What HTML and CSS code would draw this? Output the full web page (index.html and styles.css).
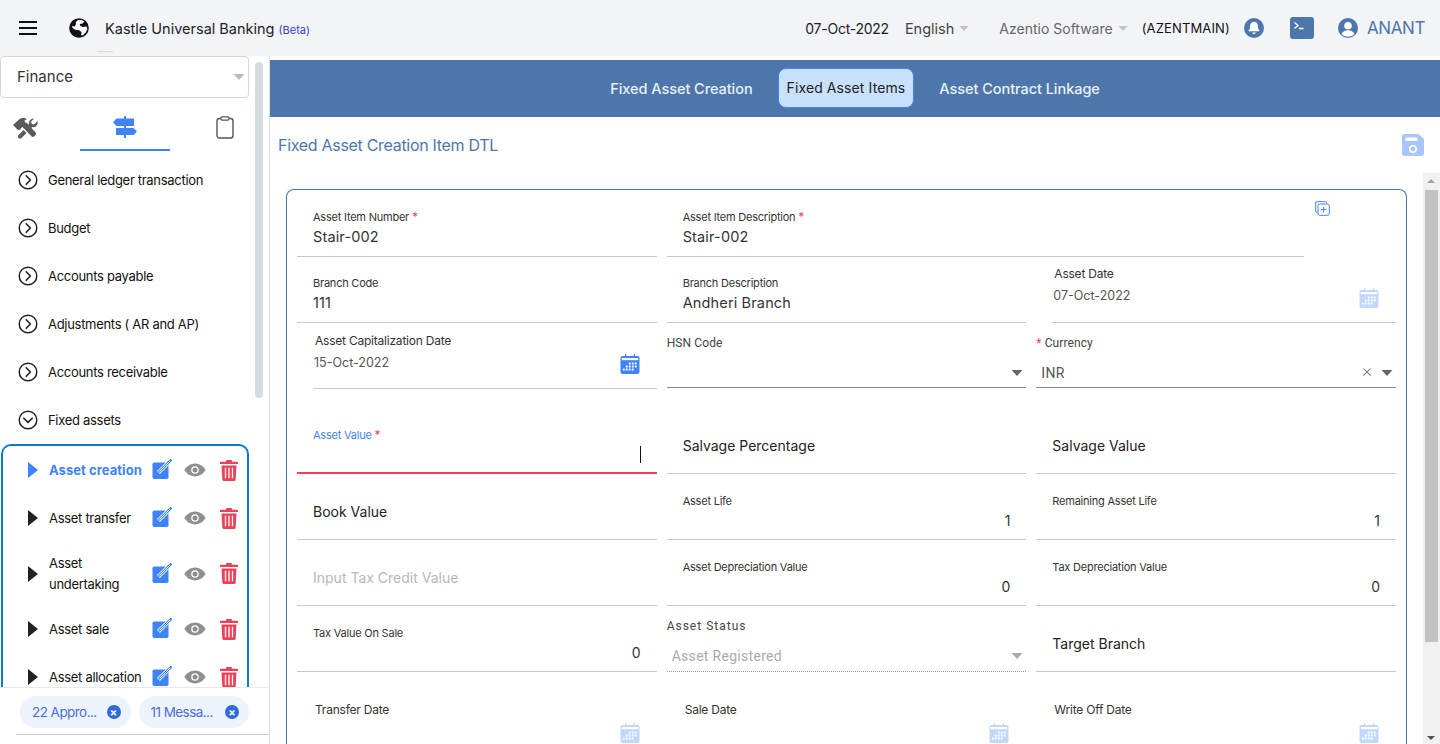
FILE: index.html
```html
<!DOCTYPE html>
<html lang="en">
<head>
    <meta charset="UTF-8">
    <meta name="viewport" content="width=device-width, initial-scale=1.0">
    <title>Kastle Universal Banking</title>
    <link rel="stylesheet" href="styles.css">
</head>
<body>
    <svg class="icon-defs" width="0" height="0">
        <defs>
            <symbol id="i-circle-right" viewBox="0 0 20 20">
                <circle cx="10" cy="10" r="8.8" fill="none" stroke="#222" stroke-width="1.5"/>
                <path d="M8.2 5.8 12.4 10l-4.2 4.2" fill="none" stroke="#222" stroke-width="1.6" stroke-linecap="round" stroke-linejoin="round"/>
            </symbol>
            <symbol id="i-circle-down" viewBox="0 0 20 20">
                <circle cx="10" cy="10" r="8.8" fill="none" stroke="#222" stroke-width="1.5"/>
                <path d="M5.8 8.2 10 12.4l4.2-4.2" fill="none" stroke="#222" stroke-width="1.6" stroke-linecap="round" stroke-linejoin="round"/>
            </symbol>
            <symbol id="i-edit" viewBox="0 0 20 20">
                <rect x=".5" y="3.500" width="16" height="16.500" rx="1.800" fill="#3f83f8"/>
                <path d="M6.500 13.500 19 1" fill="none" stroke="#fff" stroke-width="4"/>
                <path d="M6.800 13.200 19.500.5" fill="none" stroke="#3f83f8" stroke-width="2.400"/>
                <path d="M7.500 12.500 18 2" fill="none" stroke="#fff" stroke-width="1"/>
            </symbol>
            <symbol id="i-eye" viewBox="0 0 22 14">
                <path d="M11 .6C6 .6 2.300 3.800.4 7c1.900 3.200 5.600 6.400 10.600 6.400S19.700 10.200 21.600 7C19.700 3.800 16 .6 11 .6z" fill="#8f8f8f"/>
                <circle cx="11" cy="7" r="3.800" fill="#fff"/>
                <circle cx="11" cy="7" r="2.500" fill="#8f8f8f"/>
            </symbol>
            <symbol id="i-trash" viewBox="0 0 18 21">
                <path d="M6.500 0h5l.8 1.800H17.400a.6.600 0 0 1 .6.600v1.700H0V2.400a.6.600 0 0 1 .6-.6h5.100zM1.500 5.400h15l-.8 14a1.700 1.700 0 0 1-1.700 1.600H4a1.700 1.700 0 0 1-1.700-1.600z" fill="#e9435a"/>
                <path d="M5.500 7.800v10.500M9 7.800v10.500M12.500 7.800v10.500" stroke="#fff" stroke-width="1.300"/>
            </symbol>
            <symbol id="i-calendar" viewBox="0 0 20 20">
                <path d="M5 0h1.200v2h7.600V0H15v2h2.500A2 2 0 0 1 19.500 4v14a2 2 0 0 1-2 2h-15a2 2 0 0 1-2-2V4a2 2 0 0 1 2-2H5z"/>
                <path d="M1.800 4h16.400v2.200H1.800z" fill="#fff"/>
                <path d="M8.800 8.600h1.800v1.800H8.800zM11.800 8.600h1.800v1.800h-1.800zM14.800 8.600h1.800v1.800h-1.800zM5.800 11.600h1.800v1.800H5.800zM8.800 11.600h1.800v1.800H8.800zM11.800 11.600h1.800v1.800h-1.800zM14.800 11.600h1.800v1.800h-1.800zM2.900 14.600h1.800v1.800H2.900zM5.800 14.600h1.800v1.800H5.800zM8.800 14.600h1.800v1.800H8.800zM11.800 14.600h1.800v1.800h-1.800z" fill="#fff"/>
            </symbol>
            <symbol id="i-arrow" viewBox="0 0 12 6">
                <path d="M.5 0h11L6 6z"/>
            </symbol>
        </defs>
    </svg>

    <header class="topbar">
        <button class="menu-btn" aria-label="Menu"><span></span><span></span><span></span></button>
        <svg class="globe" width="20" height="20" viewBox="0 0 20 20">
            <circle cx="10" cy="10" r="9.800" fill="#111"/>
            <path d="M8.500 2.300 12.500 2l3 1.600-2 2-2.700.4.300 1.700 2.500 1.200 4-.5.800 2.600-1.600 3.400-3.300 3.200-1.300-.4.300-3.200-2.400-1.800-4.100-.5-2.600-2-.3-1.600 2.600.4L7 6l-.4-1.500z" fill="#fff"/>
        </svg>
        <div class="brand">Kastle Universal Banking <small>(Beta)</small></div>
        <div class="topbar-right">
            <span class="top-date">07-Oct-2022</span>
            <span class="top-select lang">English <svg class="top-caret" width="10" height="5"><use href="#i-arrow"/></svg></span>
            <span class="top-select company">Azentio Software <svg class="top-caret" width="10" height="5"><use href="#i-arrow"/></svg></span>
            <span class="top-code">(AZENTMAIN)</span>
            <svg class="top-bell" width="20" height="20" viewBox="0 0 20 20">
                <circle cx="10" cy="10" r="10" fill="#4d77ab"/>
                <path d="M10 3.800c-2.400 0-3.900 1.800-3.900 4.200 0 2.600-.8 3.700-1.500 4.600-.2.300 0 .7.400.7h10c.4 0 .6-.4.400-.7-.7-.9-1.500-2-1.500-4.600 0-2.400-1.500-4.200-3.900-4.200zM8.300 14.400a1.700 1.700 0 0 0 3.400 0z" fill="#fff"/>
            </svg>
            <svg class="top-term" width="24" height="22" viewBox="0 0 24 22">
                <rect width="24" height="22" rx="3" fill="#4d77ab"/>
                <path d="M4.500 5.500 8 8.500l-3.500 3M9 11.500h4.500" fill="none" stroke="#fff" stroke-width="1.300"/>
            </svg>
            <svg class="top-user" width="20" height="20" viewBox="0 0 20 20">
                <circle cx="10" cy="10" r="10" fill="#4d77ab"/>
                <circle cx="10" cy="7.800" r="3.800" fill="#fff"/>
                <path d="M3.600 16c1-2.600 3.400-3.800 6.400-3.800s5.400 1.200 6.400 3.800c-1.700 1.700-4 2.700-6.400 2.700S5.300 17.700 3.600 16z" fill="#fff"/>
            </svg>
            <span class="top-name">ANANT</span>
        </div>
    </header>

    <div class="layout">
        <aside class="sidebar">
            <div class="side-scroll"></div>
            <div class="module-select">
                <span>Finance</span>
                <svg width="12" height="6"><use href="#i-arrow"/></svg>
            </div>
            <div class="side-tabs">
                <div class="side-tab">
                    <svg width="25" height="22" viewBox="0 0 25 22">
                        <path d="M0 8 6 2.500C8.500.6 11.500.6 14 2l-2.500 1.500.6 2 1.900.5 8.500 9.500c.8 1 .7 2-.2 2.800l-1 1c-.9.800-2 .8-2.800-.1L9.500 10 8 11 7.500 12.500 5 13z" fill="#5a5a5a"/>
                        <path d="M24.500 4c.6 2.700-.5 5.200-3.100 6-.8.300-1.600.3-2.300.1L16.500 13l-3-3 2.500-2.800c-.4-2.400.9-4.700 3.300-5.500.6-.2 1.200-.3 1.800-.2l-3 3 .6 2.400 2.400.6zM10.500 13l3 3-5 5c-.9.800-2.100.8-3 0-.8-.9-.8-2.100 0-3z" fill="#5a5a5a"/>
                    </svg>
                </div>
                <div class="side-tab active">
                    <svg width="24" height="22" viewBox="0 0 24 22">
                        <path d="M11 0h2v2.500h8v7.500h-8v2h7.500l3.500 3.500-3.500 3.500H13v3h-2v-3H3v-7h8v-2H3.500L0 6.250 3.500 2.500H11z" fill="#3f83f8"/>
                    </svg>
                </div>
                <div class="side-tab">
                    <svg width="18" height="23" viewBox="0 0 18 23">
                        <rect x="1" y="2.500" width="16" height="19.500" rx="2.500" fill="none" stroke="#555" stroke-width="1.400"/>
                        <rect x="5" y=".8" width="8" height="3.400" rx="1.200" fill="#fff" stroke="#555" stroke-width="1.200"/>
                    </svg>
                </div>
            </div>
            <nav class="side-menu">
                <div class="menu-row"><svg width="20" height="20"><use href="#i-circle-right"/></svg>General ledger transaction</div>
                <div class="menu-row"><svg width="20" height="20"><use href="#i-circle-right"/></svg>Budget</div>
                <div class="menu-row"><svg width="20" height="20"><use href="#i-circle-right"/></svg>Accounts payable</div>
                <div class="menu-row"><svg width="20" height="20"><use href="#i-circle-right"/></svg>Adjustments ( AR and AP)</div>
                <div class="menu-row"><svg width="20" height="20"><use href="#i-circle-right"/></svg>Accounts receivable</div>
                <div class="menu-row"><svg width="20" height="20"><use href="#i-circle-down"/></svg>Fixed assets</div>
                <div class="sub-menu">
                    <div class="sub-row current">
                        <span class="tri"></span><span class="sub-name">Asset creation</span>
                        <svg class="ic-edit" width="20" height="20"><use href="#i-edit"/></svg>
                        <svg class="ic-eye" width="22" height="14"><use href="#i-eye"/></svg>
                        <svg class="ic-trash" width="18" height="21"><use href="#i-trash"/></svg>
                    </div>
                    <div class="sub-row">
                        <span class="tri"></span><span class="sub-name">Asset transfer</span>
                        <svg class="ic-edit" width="20" height="20"><use href="#i-edit"/></svg>
                        <svg class="ic-eye" width="22" height="14"><use href="#i-eye"/></svg>
                        <svg class="ic-trash" width="18" height="21"><use href="#i-trash"/></svg>
                    </div>
                    <div class="sub-row tall">
                        <span class="tri"></span><span class="sub-name">Asset undertaking</span>
                        <svg class="ic-edit" width="20" height="20"><use href="#i-edit"/></svg>
                        <svg class="ic-eye" width="22" height="14"><use href="#i-eye"/></svg>
                        <svg class="ic-trash" width="18" height="21"><use href="#i-trash"/></svg>
                    </div>
                    <div class="sub-row">
                        <span class="tri"></span><span class="sub-name">Asset sale</span>
                        <svg class="ic-edit" width="20" height="20"><use href="#i-edit"/></svg>
                        <svg class="ic-eye" width="22" height="14"><use href="#i-eye"/></svg>
                        <svg class="ic-trash" width="18" height="21"><use href="#i-trash"/></svg>
                    </div>
                    <div class="sub-row">
                        <span class="tri"></span><span class="sub-name">Asset allocation</span>
                        <svg class="ic-edit" width="20" height="20"><use href="#i-edit"/></svg>
                        <svg class="ic-eye" width="22" height="14"><use href="#i-eye"/></svg>
                        <svg class="ic-trash" width="18" height="21"><use href="#i-trash"/></svg>
                    </div>
                </div>
            </nav>
            <div class="side-footer">
                <div class="chips">
                    <span class="chip">22 Appro... <b>×</b></span>
                    <span class="chip">11 Messa... <b>×</b></span>
                </div>
                <div class="footer-line"></div>
            </div>
        </aside>

        <main class="content">
            <div class="band">
                <a class="band-tab">Fixed Asset Creation</a>
                <a class="band-tab active">Fixed Asset Items</a>
                <a class="band-tab">Asset Contract Linkage</a>
            </div>
            <div class="title-row">
                <h2>Fixed Asset Creation Item DTL</h2>
                <svg width="22" height="22" viewBox="0 0 22 22">
                    <path d="M3 0h13.500L22 5v14a3 3 0 0 1-3 3H3a3 3 0 0 1-3-3V3a3 3 0 0 1 3-3z" fill="#a9c5fb"/>
                    <rect x="3.500" y="3.500" width="12" height="3.500" fill="#fff"/>
                    <circle cx="11" cy="15" r="3.200" fill="none" stroke="#fff" stroke-width="1.500"/>
                </svg>
            </div>
            <div class="form-wrap">
                <div class="form-scroll">
                    <form class="form-box">
                        <svg class="copy-icon" width="15" height="15" viewBox="0 0 15 15">
                            <path d="M2.500 11.500H2A1.300 1.300 0 0 1 .7 10.200V2A1.300 1.300 0 0 1 2 .7h8.200A1.300 1.300 0 0 1 11.500 2v.5" fill="none" stroke="#3f83f8"/>
                            <rect x="3" y="3" width="11.300" height="11.300" rx="1.800" fill="#fff" stroke="#3f83f8"/>
                            <path d="M8.600 5.800v5.700M5.800 8.600h5.700" stroke="#3f83f8"/>
                        </svg>

                        <div class="field wide">
                            <label>Asset Item Number <i>*</i></label>
                            <div class="val">Stair-002</div>
                        </div>
                        <div class="field wide span2">
                            <label>Asset Item Description <i>*</i></label>
                            <div class="val">Stair-002</div>
                        </div>

                        <div class="field">
                            <label>Branch Code</label>
                            <div class="val">111</div>
                        </div>
                        <div class="field">
                            <label>Branch Description</label>
                            <div class="val">Andheri Branch</div>
                        </div>
                        <div class="date-field">
                            <label>Asset Date</label>
                            <div class="date-val">07-Oct-2022 <svg class="cal faded" width="20" height="20"><use href="#i-calendar"/></svg></div>
                        </div>

                        <div class="date-field low">
                            <label>Asset Capitalization Date</label>
                            <div class="date-val">15-Oct-2022 <svg class="cal" width="20" height="20"><use href="#i-calendar"/></svg></div>
                        </div>
                        <div class="select-field">
                            <label>HSN Code</label>
                            <div class="sel-val"><span></span><svg width="12" height="6"><use href="#i-arrow"/></svg></div>
                        </div>
                        <div class="select-field">
                            <label><i>*</i> Currency</label>
                            <div class="sel-val"><span>INR</span><em>×</em><svg width="12" height="6"><use href="#i-arrow"/></svg></div>
                        </div>

                        <div class="field focused">
                            <label>Asset Value <i>*</i></label>
                            <div class="val"><span class="caret"></span></div>
                        </div>
                        <div class="field empty"><div class="val">Salvage Percentage</div></div>
                        <div class="field empty"><div class="val">Salvage Value</div></div>

                        <div class="field empty"><div class="val">Book Value</div></div>
                        <div class="field num">
                            <label>Asset Life</label>
                            <div class="val">1</div>
                        </div>
                        <div class="field num">
                            <label>Remaining Asset Life</label>
                            <div class="val">1</div>
                        </div>

                        <div class="field empty muted"><div class="val">Input Tax Credit Value</div></div>
                        <div class="field num">
                            <label>Asset Depreciation Value</label>
                            <div class="val">0</div>
                        </div>
                        <div class="field num">
                            <label>Tax Depreciation Value</label>
                            <div class="val">0</div>
                        </div>

                        <div class="field num">
                            <label>Tax Value On Sale</label>
                            <div class="val">0</div>
                        </div>
                        <div class="select-field disabled">
                            <label>Asset Status</label>
                            <div class="sel-val"><span>Asset Registered</span><svg width="12" height="6"><use href="#i-arrow"/></svg></div>
                        </div>
                        <div class="field empty"><div class="val">Target Branch</div></div>

                        <div class="date-field low">
                            <label>Transfer Date</label>
                            <div class="date-val"><span></span><svg class="cal faded" width="20" height="20"><use href="#i-calendar"/></svg></div>
                        </div>
                        <div class="date-field low">
                            <label>Sale Date</label>
                            <div class="date-val"><span></span><svg class="cal faded" width="20" height="20"><use href="#i-calendar"/></svg></div>
                        </div>
                        <div class="date-field low">
                            <label>Write Off Date</label>
                            <div class="date-val"><span></span><svg class="cal faded" width="20" height="20"><use href="#i-calendar"/></svg></div>
                        </div>
                    </form>
                </div>
                <div class="scrollbar">
                    <span class="sb-up"></span>
                    <span class="sb-thumb"></span>
                    <span class="sb-down"></span>
                </div>
            </div>
        </main>
    </div>
</body>
</html>
```

FILE: styles.css
```css
* {
    box-sizing: border-box;
}
html, body {
    margin: 0;
    height: 100%;
    overflow: hidden;
}
body {
    font-family: Inter, "Liberation Sans", sans-serif;
    color: #222;
    background: #fff;
    display: flex;
    flex-direction: column;
}
.icon-defs {
    position: absolute;
}

/* top bar */
.topbar {
    height: 56px;
    flex: none;
    display: flex;
    align-items: center;
    background: #f3f4f8;
    padding-left: 19px;
    position: relative;
}
.topbar::after {
    content: "";
    position: absolute;
    left: 97px;
    bottom: 4px;
    width: 16px;
    height: 1px;
    background: #d8d8d8;
}
.menu-btn {
    width: 18px;
    height: 14px;
    padding: 0;
    border: 0;
    background: none;
    display: flex;
    flex-direction: column;
    justify-content: space-between;
}
.menu-btn span {
    display: block;
    height: 2px;
    background: #111;
}
.globe {
    margin-left: 32px;
}
.brand {
    margin-left: 16px;
    font-size: 14.5px;
    color: #222;
}
.brand small {
    font-size: 11px;
    color: #3a3ae0;
}
.topbar-right {
    margin-left: auto;
    display: flex;
    align-items: center;
    padding-right: 15px;
    font-size: 14px;
}
.top-date {
    color: #222;
    margin-right: 16px;
    letter-spacing: -.25px;
}
.top-select {
    color: #444;
    display: flex;
    align-items: center;
    gap: 5px;
}
.top-select.lang {
    font-size: 14.5px;
}
.top-select.company {
    color: #666;
    margin-left: 30px;
}
.top-caret {
    fill: #c4c4c4;
}
.top-code {
    margin-left: 14px;
    font-size: 13px;
    color: #111;
    letter-spacing: .15px;
}
.top-bell {
    margin-left: 14px;
}
.top-term {
    margin-left: 26px;
}
.top-user {
    margin-left: 24px;
}
.top-name {
    margin-left: 9px;
    font-size: 17px;
    letter-spacing: -.4px;
    color: #4d77ab;
}

.layout {
    flex: 1;
    min-height: 0;
    display: flex;
}

/* sidebar */
.sidebar {
    width: 270px;
    flex: none;
    border-right: 1px solid #ddd;
    display: flex;
    flex-direction: column;
    position: relative;
    overflow: hidden;
}
.side-scroll {
    position: absolute;
    left: 255px;
    top: 6px;
    width: 8px;
    height: 336px;
    border-radius: 4px;
    background: #d3dde0;
}
.module-select {
    width: 249px;
    height: 42px;
    flex: none;
    border: 1px solid #d5d5d8;
    border-radius: 4px;
    display: flex;
    align-items: center;
    justify-content: space-between;
    padding: 0 3px 2px 16px;
    font-size: 15px;
    color: #333;
}
.module-select svg {
    fill: #bbb;
    margin-top: 2px;
}
.side-tabs {
    width: 250px;
    height: 53px;
    flex: none;
    display: grid;
    grid-template-columns: 50px 1fr 50px;
    column-gap: 30px;
}
.side-tab {
    display: flex;
    align-items: center;
    justify-content: center;
    padding-top: 10px;
    padding-bottom: 4px;
}
.side-tab.active {
    border-bottom: 2px solid #3f83f8;
}
.side-menu {
    flex: 1;
    min-height: 0;
    overflow: hidden;
    padding-top: 5px;
}
.menu-row {
    height: 48px;
    display: flex;
    align-items: center;
    padding-left: 18px;
    gap: 10px;
    font-size: 13px;
    color: #111;
    letter-spacing: -.3px;
}
.sub-menu {
    width: 248px;
    margin-left: 1px;
    border: 2px solid #0a7ad0;
    border-bottom: 0;
    border-radius: 10px 10px 0 0;
    padding-right: 9px;
}
.sub-row {
    height: 48px;
    display: flex;
    align-items: center;
    font-size: 13px;
    color: #111;
    letter-spacing: -.3px;
}
.sub-row.tall {
    height: 63px;
}
.tri {
    width: 0;
    height: 0;
    margin-left: 25px;
    flex: none;
    border-left: 10px solid #222;
    border-top: 8px solid transparent;
    border-bottom: 8px solid transparent;
}
.sub-name {
    width: 103px;
    margin-left: 11px;
    flex: none;
    line-height: 21px;
}
.current .tri {
    border-left-color: #3f83f8;
}
.current .sub-name {
    color: #3f83f8;
    font-weight: 700;
    letter-spacing: .05px;
}
.ic-edit {
    flex: none;
    margin-top: -2px;
}
.ic-eye {
    flex: none;
    margin-left: 12px;
}
.ic-trash {
    flex: none;
    margin-left: 14px;
}
.side-footer {
    height: 57px;
    flex: none;
    background: #fff;
    border-top: 1px solid #e8e8e8;
}
.chips {
    display: flex;
    gap: 8px;
    padding: 8px 0 0 20px;
}
.chip {
    width: 110.5px;
    height: 32px;
    border-radius: 16px;
    background: #edf3fc;
    color: #4a6fd8;
    font-size: 13.5px;
    letter-spacing: -.55px;
    display: flex;
    align-items: center;
    justify-content: space-between;
    padding: 0 10px 0 12px;
    white-space: nowrap;
}
.chip b {
    width: 14px;
    height: 14px;
    border-radius: 50%;
    background: #2f6bd8;
    color: #fff;
    font-size: 11px;
    line-height: 14px;
    letter-spacing: 0;
    text-align: center;
}
.footer-line {
    margin: 6px 0 0 16px;
    border-top: 1px solid #ccc;
}

/* main area */
.content {
    flex: 1;
    min-width: 0;
    display: flex;
    flex-direction: column;
}
.band {
    height: 57px;
    flex: none;
    margin-top: 4px;
    background: #4d77ab;
    display: flex;
    align-items: center;
    justify-content: center;
}
.band-tab {
    color: #eaf0f7;
    font-size: 14.5px;
    font-weight: 500;
    letter-spacing: -.05px;
    padding: 0 8px;
    line-height: 38px;
    border: 1px solid transparent;
    margin: 0 8px;
}
.band-tab.active {
    background: #c8e1ff;
    color: #222;
    font-size: 14px;
    font-weight: 400;
    letter-spacing: .1px;
    border-color: #3f83f8;
    border-radius: 8px;
    margin-top: -1px;
}
.title-row {
    height: 56px;
    flex: none;
    display: flex;
    align-items: center;
    justify-content: space-between;
    padding: 0 16px 0 8px;
}
.title-row h2 {
    margin: 0;
    font-size: 16px;
    font-weight: 400;
    letter-spacing: -.3px;
    color: #4d77ab;
}
.form-wrap {
    flex: 1;
    min-height: 0;
    display: flex;
}
.form-scroll {
    flex: 1;
    min-width: 0;
    overflow: hidden;
    padding: 16px 16px 0;
}
.form-box {
    position: relative;
    border: 1px solid #4d77ab;
    border-bottom: 0;
    border-radius: 8px 8px 0 0;
    padding: 0 10px;
    display: grid;
    grid-template-columns: repeat(3, 1fr);
    grid-template-rows: 67px 66px 66px 85px 66px 66px 66px 86px;
    column-gap: 10px;
}
.copy-icon {
    position: absolute;
    left: 1028px;
    top: 11px;
}
.field, .date-field, .select-field {
    display: flex;
    flex-direction: column;
    justify-content: flex-end;
    min-width: 0;
}
label {
    font-size: 11px;
    line-height: 16px;
    color: #333;
    letter-spacing: -.22px;
}
label i {
    color: #e9435a;
    font-style: normal;
    font-size: 12px;
}
.field {
    padding: 0 16px 9px;
    border-bottom: 1px solid #c8c8c8;
}
.field .val {
    height: 20px;
    line-height: 20px;
    margin-top: 2px;
    font-size: 14.5px;
    letter-spacing: .15px;
    color: #333;
}
.field.span2 {
    grid-column: span 2;
    margin-right: 92px;
}
.field.empty {
    padding-bottom: 17px;
}
.field.empty .val {
    font-size: 14px;
    letter-spacing: 0;
    color: #222;
}
.field.empty.muted .val {
    color: #b8b8b8;
}
.field.num {
    padding-bottom: 8px;
}
.field.num .val {
    text-align: right;
    font-size: 14px;
    letter-spacing: 0;
}
.field.focused {
    border-bottom: 2px solid #e9435a;
    padding-bottom: 8px;
}
.field.focused label {
    color: #3f83f8;
}
.field.focused .val {
    position: relative;
    height: 18px;
    margin-top: 3px;
}
.caret {
    position: absolute;
    right: 0;
    top: 0;
    width: 1px;
    height: 17px;
    background: #111;
}
.date-field {
    margin-left: 16px;
    padding: 0 17px 16px 2px;
    border-bottom: 1px solid #c8c8c8;
}
.date-field.low {
    padding-bottom: 15px;
}
.date-field label {
    font-size: 12px;
    letter-spacing: -.22px;
    color: #333;
}
.date-val {
    display: flex;
    justify-content: space-between;
    align-items: flex-start;
    height: 20px;
    margin-top: 4px;
    margin-left: -1px;
    font-size: 12.5px;
    line-height: 20px;
    color: #555;
}
.cal {
    fill: #3f83f8;
    margin-top: 2px;
}
.low .cal {
    margin-top: 1px;
}
.cal.faded {
    fill: #c3d7fb;
}
.select-field {
    padding-bottom: 4px;
    margin-bottom: 1px;
    border-bottom: 1px solid #8a8a8a;
}
.select-field label {
    font-family: Roboto, sans-serif;
    font-size: 12px;
    letter-spacing: .1px;
    color: #444;
}
.sel-val {
    height: 20px;
    margin-top: 12px;
    padding-left: 5px;
    display: flex;
    align-items: center;
    font-family: Roboto, sans-serif;
    font-size: 14px;
    color: #555;
}
.sel-val span {
    flex: 1;
    letter-spacing: .3px;
}
.sel-val em {
    font-style: normal;
    font-size: 19px;
    font-weight: 300;
    color: #777;
    margin-right: 9px;
    margin-bottom: 5px;
}
.sel-val svg {
    fill: #666;
    margin-right: 3px;
}
.select-field.disabled {
    padding-bottom: 5px;
    border-bottom: 1px dotted #999;
    margin-bottom: 0;
}
.select-field.disabled label {
    letter-spacing: 1px;
}
.select-field.disabled .sel-val {
    margin-top: 12px;
    color: #aaa;
}
.select-field.disabled .sel-val svg {
    fill: #aaa;
}

/* form scrollbar */
.scrollbar {
    width: 17px;
    flex: none;
    background: #f0f0f0;
    position: relative;
}
.sb-up, .sb-down {
    position: absolute;
    left: 4px;
    width: 0;
    height: 0;
    border-left: 4px solid transparent;
    border-right: 4px solid transparent;
}
.sb-up {
    top: 6px;
    border-bottom: 4px solid #a3a3a3;
}
.sb-down {
    bottom: 4px;
    border-top: 4px solid #505050;
}
.sb-thumb {
    position: absolute;
    left: 2px;
    top: 17px;
    width: 13px;
    height: 452px;
    background: #c1c1c1;
}
```
